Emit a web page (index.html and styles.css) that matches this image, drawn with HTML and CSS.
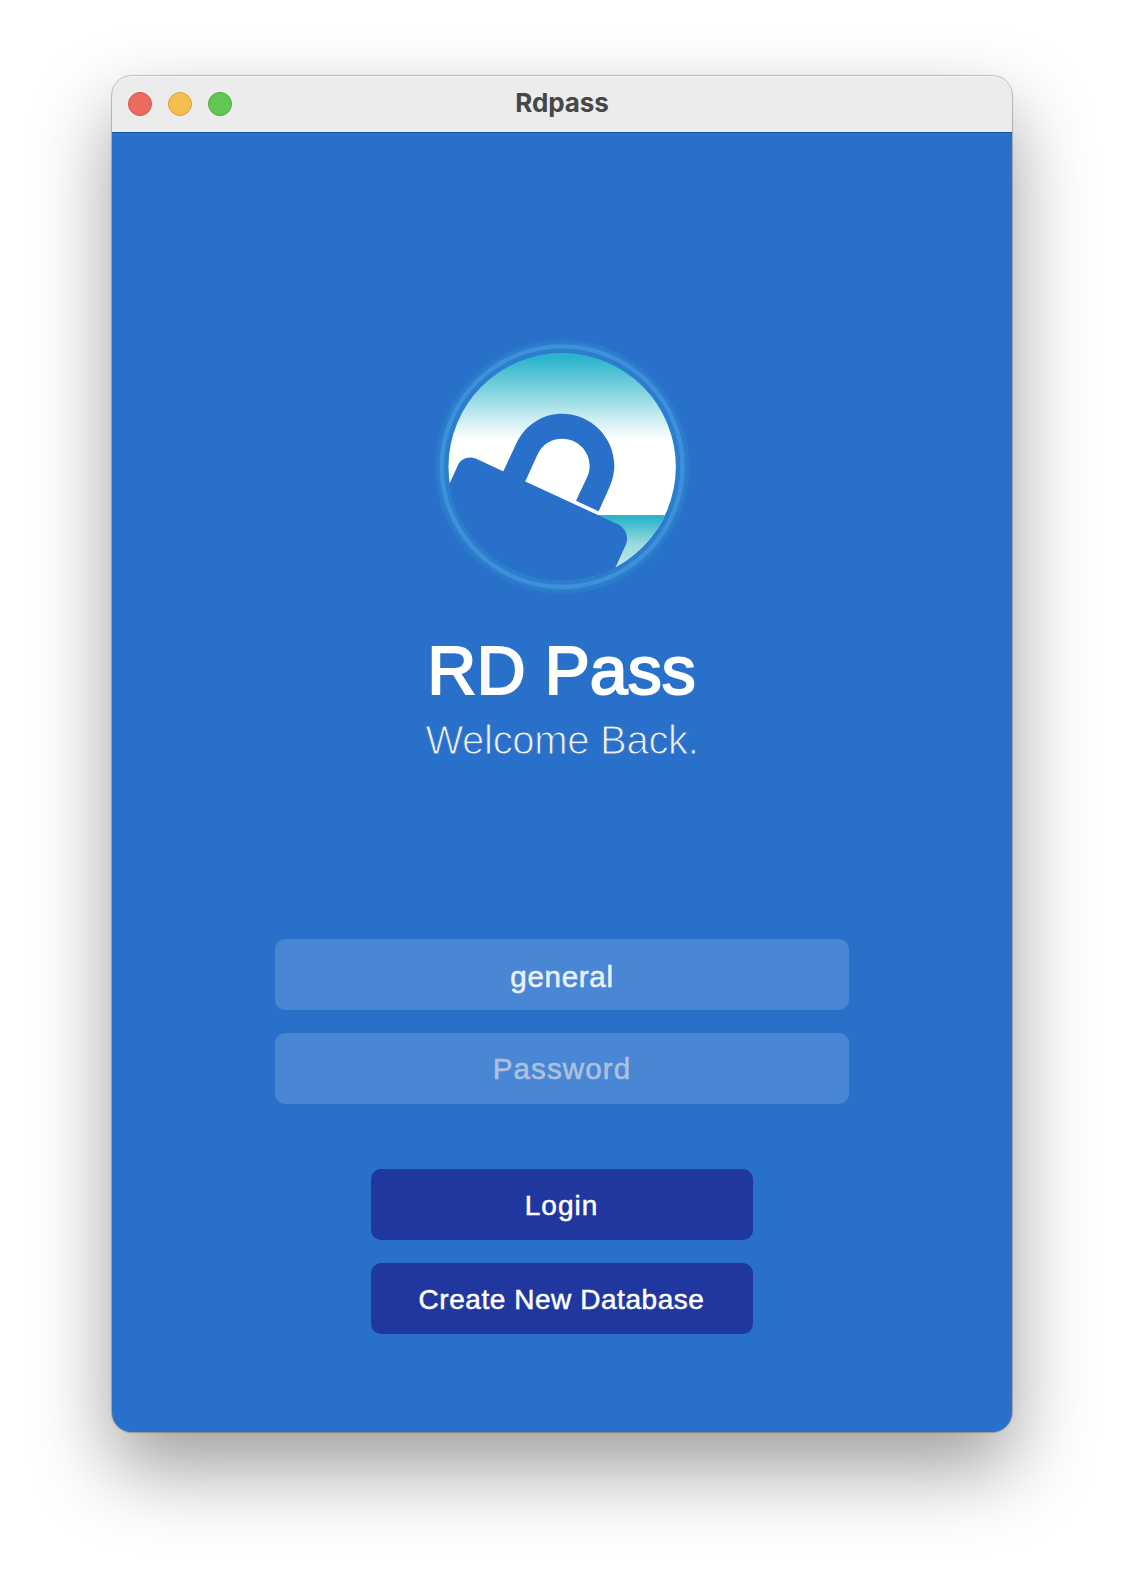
FILE: index.html
```html
<!DOCTYPE html>
<html lang="en">
<head>
<meta charset="utf-8">
<title>Rdpass</title>
<link rel="stylesheet" href="styles.css">
</head>
<body>
<main class="window">
  <header class="titlebar">
    <div class="lights">
      <span class="light close"></span>
      <span class="light minimize"></span>
      <span class="light maximize"></span>
    </div>
    <span class="title">Rdpass</span>
  </header>
  <section class="content">
    <svg class="logo" viewBox="0 0 810 810" aria-hidden="true">
      <defs>
        <linearGradient id="sky" gradientUnits="userSpaceOnUse" x1="0" y1="69" x2="0" y2="330">
          <stop offset="0.05" stop-color="#2bb4cb"/>
          <stop offset="0.2" stop-color="#4bc0d3"/>
          <stop offset="0.75" stop-color="#caedf2"/>
          <stop offset="1" stop-color="#fff"/>
        </linearGradient>
        <linearGradient id="sea" gradientUnits="userSpaceOnUse" x1="0" y1="555" x2="0" y2="700">
          <stop offset="0.05" stop-color="#2bb4ca"/>
          <stop offset="0.6" stop-color="#9adbdd"/>
          <stop offset="1" stop-color="#bae6e3"/>
        </linearGradient>
        <clipPath id="disc"><circle cx="411.5" cy="410" r="341"/></clipPath>
        <clipPath id="lock"><circle cx="411.5" cy="410" r="343"/></clipPath>
      </defs>
      <circle cx="411.5" cy="410" r="382" fill="#2a79cb"/>
      <circle cx="411.5" cy="410" r="375" fill="#2a7ecd"/>
      <circle cx="411.5" cy="410" r="361" fill="none" stroke="#3f8fdb" stroke-width="13"/>
      <g clip-path="url(#disc)">
        <rect x="60" y="60" width="700" height="700" fill="url(#sky)"/>
        <rect x="400" y="555" width="360" height="200" fill="url(#sea)"/>
        <path d="M235 424 278 332C306 281 356 251 411 251C496 251 568 320 568 408C568 427 563 448 555 468L521 544 453 512 487 440C492 430 494 419 494 408C494 362 457 326 411 326C380 326 351 343 338 373L301 454 290 475 225 445Z" fill="#2970ca"/>
      </g>
      <path clip-path="url(#lock)" d="M60 491 98 407C107 386 133 376 157 388L577 582C601 592 613 622 602 645L530 804H60Z" fill="#2970ca"/>
    </svg>
    <h1 class="name">RD Pass</h1>
    <p class="welcome">Welcome Back.</p>
    <form class="form">
      <div class="field user">general</div>
      <div class="field password">Password</div>
      <button class="button login" type="button">Login</button>
      <button class="button create" type="button">Create New Database</button>
    </form>
  </section>
</main>
</body>
</html>
```
FILE: styles.css
```css
* { box-sizing: border-box; }
body {
  margin: 0;
  padding: 76px 112px 148px;
  height: 1580px;
  background: #fff;
  font-family: "Liberation Sans", Arial, sans-serif;
  overflow: hidden;
}
.window {
  width: 900px;
  height: 1356px;
  border-radius: 20px;
  background: #2970ca;
  box-shadow: 0 0 0 1px rgba(0, 0, 0, .18), 0 0 3px rgba(0, 0, 0, .1), 0 36px 80px rgba(0, 0, 0, .39);
}
.titlebar {
  display: grid;
  grid-template-columns: 1fr auto 1fr;
  align-items: center;
  height: 56px;
  padding: 0 16px;
  border-radius: 20px 20px 0 0;
  background: #ececec;
  box-shadow: inset 0 1px #f8f8f8;
}
.lights { display: flex; gap: 16px; }
.light {
  width: 24px;
  height: 24px;
  border: 1px solid;
  border-radius: 50%;
}
.close { background: #ed6a5f; border-color: #d5524a; }
.minimize { background: #f5bf4f; border-color: #d8a13d; }
.maximize { background: #62c655; border-color: #4fa73e; }
.title {
  padding-bottom: 2px;
  font: 700 26px/30px Inter, sans-serif;
  color: #474747;
  letter-spacing: -.1px;
}
.content {
  display: flex;
  flex-direction: column;
  align-items: center;
  height: 1300px;
  padding-top: 198px;
  border-top: 1px solid #0f54ab;
  border-radius: 0 0 20px 20px;
}
.logo { width: 270px; height: 270px; margin: -1px 4px 0 0; flex: none; }
.name {
  margin: 31px 1px 0 0;
  font-size: 68px;
  font-weight: 400;
  line-height: 78px;
  color: #fff;
  -webkit-text-stroke: 2px #fff;
}
.welcome {
  margin: 8px 0 0;
  font-size: 40px;
  line-height: 46px;
  letter-spacing: -.3px;
  color: #f0f0f2;
  -webkit-text-stroke: 1px #2970ca;
}
.form {
  display: flex;
  flex-direction: column;
  align-items: center;
  margin-top: 176px;
}
.field, .button {
  display: flex;
  align-items: center;
  justify-content: center;
  border-radius: 10px;
}
.field {
  width: 574px;
  height: 71px;
  margin-bottom: 23px;
  background: #4986d4;
  font-size: 29.5px;
  color: #e9f0fb;
  letter-spacing: .7px;
  -webkit-text-stroke: .6px currentColor;
}
.user { padding-top: 4px; }
.password { color: #adc1df; letter-spacing: 1.1px; }
.button {
  width: 382px;
  height: 71px;
  margin-right: 1px;
  border: 0;
  padding: 3px 0 0;
  background: #20379f;
  font: 28px/32px "Liberation Sans", Arial, sans-serif;
  letter-spacing: .55px;
  color: #fff;
  -webkit-text-stroke: .5px #fff;
}
.login { margin-top: 42px; letter-spacing: 1px; }
.create { margin-top: 23px; }
```
